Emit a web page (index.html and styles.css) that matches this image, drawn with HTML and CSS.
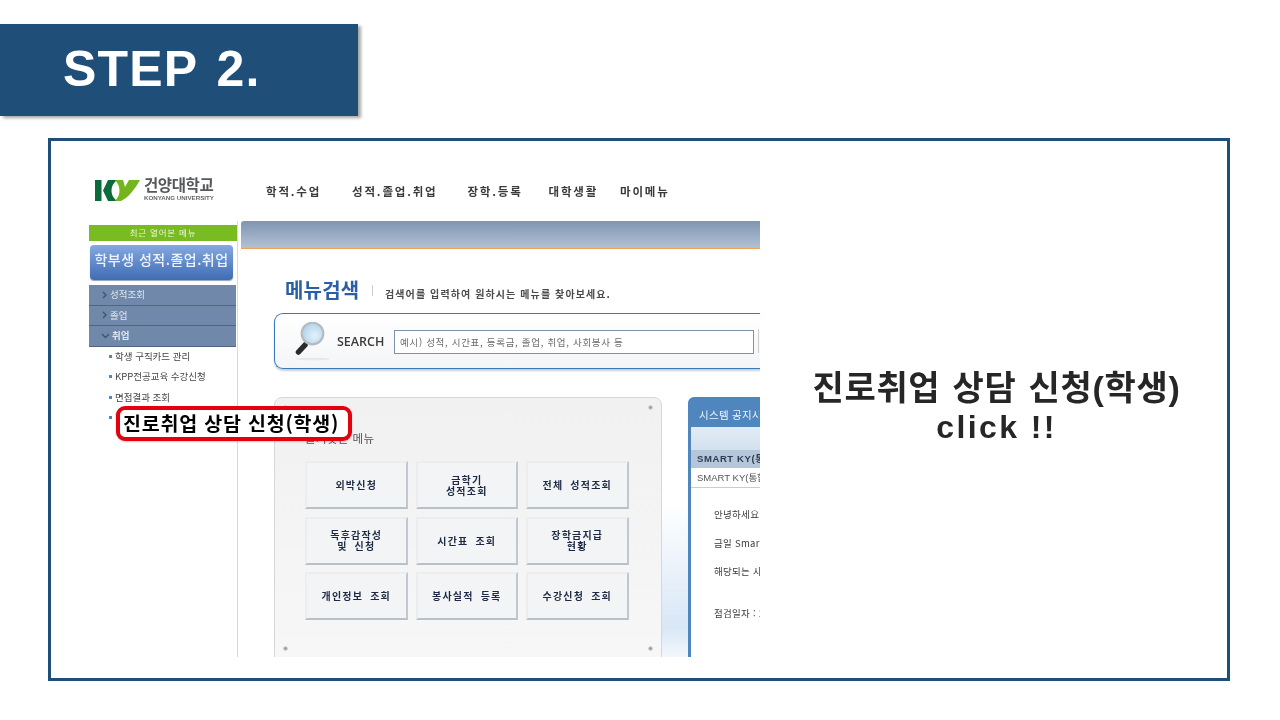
FILE: index.html
```html
<!DOCTYPE html>
<html lang="ko">
<head>
<meta charset="utf-8">
<title>STEP 2.</title>
<link rel="stylesheet" href="styles.css">
</head>
<body>
<div class="slide">
  <h1 class="banner">STEP 2.</h1>
  <section class="frame">
    <div class="shot">
      <header class="shot-head">
        <div class="logo">
          <svg class="logo-mark" width="46" height="21" viewBox="0 0 46 21">
            <rect x="0" y="0" width="6.500" height="21" fill="#0b6b3a"/>
            <path d="M8 10.500 L13 0 H22 C18 3 16.500 7 16.500 10.500 C16.500 14 18 18 22 21 H13 Z" fill="#0b6b3a"/>
            <path d="M20 0 H28 C29 3 29.500 5 30 7 L34 0 H45 C40 9 33 18 26 21 H20 C23 18 24.500 14 24.500 10.500 C24.500 7 23 3 20 0 Z" fill="#74b51e"/>
          </svg>
          <div class="logo-text">
            <span class="logo-ko">건양대학교</span>
            <span class="logo-en">KONYANG UNIVERSITY</span>
          </div>
        </div>
        <nav class="topnav">
          <span>학적.수업</span>
          <span>성적.졸업.취업</span>
          <span>장학.등록</span>
          <span>대학생활</span>
          <span>마이메뉴</span>
        </nav>
      </header>
      <div class="shot-body">
        <aside class="side">
          <div class="recent">최근 열어본 메뉴</div>
          <div class="side-title">학부생 성적.졸업.취업</div>
          <ul class="side-menu">
            <li><svg width="7" height="8" viewBox="0 0 7 8"><path d="M2 1l3 3-3 3" fill="none" stroke="#3d566f" stroke-width="1.4"/></svg>성적조회</li>
            <li><svg width="7" height="8" viewBox="0 0 7 8"><path d="M2 1l3 3-3 3" fill="none" stroke="#3d566f" stroke-width="1.4"/></svg>졸업</li>
            <li class="open"><svg width="9" height="8" viewBox="0 0 9 8"><path d="M1 2l3.500 3.500L8 2" fill="none" stroke="#3d566f" stroke-width="1.4"/></svg>취업</li>
          </ul>
          <ul class="side-sub">
            <li>학생 구직카드 관리</li>
            <li>KPP전공교육 수강신청</li>
            <li>면접결과 조회</li>
            <li>진로취업 상담 신청(학생)</li>
          </ul>
        </aside>
        <main class="main">
          <div class="main-bar"></div>
          <div class="main-inner">
            <div class="title-row">
              <h2>메뉴검색</h2>
              <p>검색어를 입력하여 원하시는 메뉴를 찾아보세요.</p>
            </div>
            <div class="search">
              <svg class="lens" width="38" height="40" viewBox="0 0 38 40">
                <defs>
                  <radialGradient id="glass" cx=".6" cy=".6" r=".7">
                    <stop offset="0" stop-color="#e4f1fa"/>
                    <stop offset="1" stop-color="#a9cfe8"/>
                  </radialGradient>
                </defs>
                <ellipse cx="19" cy="37" rx="17" ry="1.300" fill="#e8e8e8"/>
                <path d="M11 23 L4.500 30" stroke="#2b2b2b" stroke-width="5.500" stroke-linecap="round"/>
                <circle cx="18.500" cy="11.500" r="10.800" fill="url(#glass)" stroke="#b4bcc2" stroke-width="2.200"/>
              </svg>
              <span class="search-label">SEARCH</span>
              <div class="search-input">예시) 성적, 시간표, 등록금, 졸업, 취업, 사회봉사 등</div>
              <div class="search-btn"></div>
            </div>
            <div class="panels">
              <div class="quick">
                <i class="rivet tl"></i><i class="rivet tr"></i><i class="rivet bl"></i><i class="rivet br"></i>
                <h3>즐겨찾는 메뉴</h3>
                <div class="quick-grid">
                  <a>외박신청</a>
                  <a>금학기<br>성적조회</a>
                  <a>전체 성적조회</a>
                  <a>독후감작성<br>및 신청</a>
                  <a>시간표 조회</a>
                  <a>장학금지급<br>현황</a>
                  <a>개인정보 조회</a>
                  <a>봉사실적 등록</a>
                  <a>수강신청 조회</a>
                </div>
              </div>
              <div class="glow"></div>
              <div class="notice">
                <div class="notice-title">시스템 공지사항</div>
                <div class="notice-body">
                  <div class="notice-band"></div>
                  <div class="notice-subject">SMART KY(통합정보시스템)</div>
                  <div class="notice-sub">SMART KY(통합정보시스템)</div>
                  <p class="n1">안녕하세요. 정보운영팀입니다.</p>
                  <p class="n2">금일 Smart KY 시스템 점검</p>
                  <p class="n3">해당되는 사용자께서는</p>
                  <p class="n4">점검일자 : 2020년</p>
                </div>
              </div>
            </div>
          </div>
        </main>
      </div>
      <div class="callout">진로취업 상담 신청(학생)</div>
    </div>
    <div class="caption">
      <p>진로취업 상담 신청(학생)</p>
      <p class="click">click !!</p>
    </div>
  </section>
</div>
</body>
</html>
```

FILE: styles.css
```css
* { box-sizing: border-box; }
html, body { margin: 0; padding: 0; background: #fff; }
body { font-family: "Liberation Sans", "Noto Sans CJK KR", sans-serif; overflow: hidden; }
h1, h2, h3, p, ul { margin: 0; padding: 0; }
ul { list-style: none; }

.slide { width: 1280px; height: 720px; padding-top: 24px; filter: blur(.35px); }

.banner {
  width: 358px; height: 92px;
  padding-left: 63px;
  background: #1f4e79;
  color: #fff;
  font-size: 50px; line-height: 90px; font-weight: 700; letter-spacing: 1.200px; word-spacing: 4px;
  box-shadow: 3px 2px 3px rgba(0,0,0,.35);
}

.frame {
  width: 1182px; height: 543px;
  margin: 22px 0 0 48px;
  border: 3px solid #1f4e79;
  display: flex;
}

.shot {
  position: relative;
  flex: none;
  width: 709px; height: 516px;
  padding-left: 38px;
  overflow: hidden;
  font-family: "Noto Sans CJK KR", sans-serif;
}

.shot-head { height: 80px; display: flex; align-items: flex-start; }

.logo { width: 177px; padding: 37px 0 0 6px; display: flex; gap: 3px; }
.logo-mark { flex: none; margin-top: 2px; }
.logo-text { display: flex; flex-direction: column; margin-top: -2px; }
.logo-ko { font-size: 15.500px; line-height: 17px; font-weight: 700; color: #55595c; white-space: nowrap; letter-spacing: -.4px; }
.logo-en { font-size: 6.200px; line-height: 9px; font-weight: 700; color: #666; white-space: nowrap; font-family: "Liberation Sans", sans-serif; }

.topnav { display: flex; padding-top: 41px; font-size: 11.500px; line-height: 18px; color: #3a3a3a; letter-spacing: 1.800px; font-weight: 700; white-space: nowrap; }
.topnav span:nth-child(2) { margin-left: 31px; }
.topnav span:nth-child(3) { margin-left: 30px; }
.topnav span:nth-child(4) { margin-left: 26px; }
.topnav span:nth-child(5) { margin-left: 22px; }

.shot-body { display: flex; height: 436px; }

.side { flex: none; width: 149px; padding-top: 4px; border-right: 1px solid #d5d8dc; }
.recent { width: 148px; height: 16px; background: #78bc21; color: #e9f5d5; font-size: 8.500px; line-height: 15px; text-align: center; letter-spacing: .8px; }
.side-title {
  width: 143px; height: 35px; margin: 4px 0 0 1px;
  border-radius: 4px;
  background: linear-gradient(#85a9e0, #3f6cb4);
  color: #eef3fb;
  font-size: 14px; line-height: 28px; font-weight: 500; text-align: center; letter-spacing: .5px;
  white-space: nowrap;
  box-shadow: 0 1px 1px #8ea3bd;
}
.side-menu { margin-top: 5px; }
.side-menu li {
  width: 147px; height: 20.500px;
  background: #7089ab;
  border-bottom: 1px solid #50657f;
  color: #dfe6ee;
  font-size: 9.500px; line-height: 19px;
  padding-left: 12px;
  display: flex; align-items: center; gap: 2px;
}
.side-menu li.open { font-weight: 700; }
.side-sub { padding-left: 21px; margin-top: -1px; }
.side-sub li { position: relative; height: 20.500px; padding-left: 5px; font-size: 9.500px; line-height: 20px; color: #444; white-space: nowrap; }
.side-sub li::before { content: ""; position: absolute; left: -1px; top: 9px; width: 3px; height: 3px; background: #4f86bd; }

.main { flex: none; width: 519px; margin-left: 3px; overflow: hidden; }
.main-bar { height: 28px; border-radius: 3px 0 0 0; background: linear-gradient(#7f95b3, #b3c1d3); border-bottom: 1px solid #eda45a; }
.main-inner { padding-left: 33px; }

.title-row { display: flex; align-items: center; height: 36px; margin: 23px 0 0 11px; }
.title-row h2 { font-size: 20px; line-height: 30px; font-weight: 700; color: #2a5fa8; letter-spacing: .2px; width: 88px; position: relative; }
.title-row h2::after { content: ""; position: absolute; right: 0; top: 10px; width: 1px; height: 11px; background: #ccc; }
.title-row p { margin-left: 12px; padding-top: 6px; font-size: 10px; font-weight: 700; color: #4a4a4a; letter-spacing: 1.100px; white-space: nowrap; }

.search {
  width: 520px; height: 56px; margin-top: 5px;
  border: 1.500px solid #3a78b8; border-right: 0;
  border-radius: 9px 0 0 9px;
  background: linear-gradient(#fff, #f4f5f7);
  box-shadow: 0 2px 2px rgba(90,120,150,.35);
  display: flex; align-items: center;
  padding-left: 19px;
}
.lens { flex: none; margin-top: 2px; }
.search-label { margin-left: 5px; font-family: "Open Sans", sans-serif; font-size: 12.500px; font-weight: 600; color: #3c3c3c; width: 57px; }
.search-input { flex: none; width: 360px; height: 24px; margin-top: 1px; border: 1px solid #7d93ad; padding-left: 5px; font-size: 9.500px; line-height: 22px; color: #6b6b6b; letter-spacing: .7px; background: #fff; white-space: nowrap; }
.search-btn { flex: none; width: 1px; height: 24px; margin-left: 4px; background: #ccc; }

.panels { display: flex; margin-top: 28px; }

.quick {
  position: relative; flex: none;
  width: 388px; height: 262px;
  border: 1px solid #d7d7d7;
  border-radius: 8px 8px 0 0;
  background: linear-gradient(#f1f1f2, #f7f7f8);
  padding: 30px 0 0 30px;
}
.quick h3 { font-size: 11.500px; line-height: 20px; font-weight: 400; color: #555; letter-spacing: .4px; }
.quick-grid { display: grid; grid-template-columns: repeat(3, 102.500px); grid-auto-rows: 48px; column-gap: 8px; row-gap: 7.500px; margin-top: 13px; }
.quick-grid a {
  display: flex; align-items: center; justify-content: center;
  text-align: center;
  padding-bottom: 1px;
  background: #f3f4f5;
  border: 2px solid #ebedef; border-right-color: #c0c7ce; border-bottom-color: #b8c0c8;
  font-size: 10px; line-height: 11px; font-weight: 700; color: #1e2a44; letter-spacing: 1.200px; word-spacing: 3px;
}
.rivet { position: absolute; width: 5px; height: 5px; border-radius: 50%; background: #9aa0a4; border: 1px solid #d9d9d9; }
.tl { left: 8px; top: 7px; } .tr { right: 8px; top: 7px; }
.bl { left: 8px; bottom: 7px; } .br { right: 8px; bottom: 7px; }

.glow { flex: none; width: 26px; background: linear-gradient(#fff 40%, #d8e7f6 88%, #f4f8fc); }

.notice {
  flex: none; width: 110px; height: 262px;
  background: #4f86bd;
  border-radius: 6px 0 0 0;
  padding-left: 3px;
  overflow: hidden;
}
.notice-title { height: 30px; padding-left: 8px; color: #eef4fa; font-size: 10.500px; line-height: 36px; letter-spacing: .3px; white-space: nowrap; overflow: hidden; width: 68px; }
.notice-body { width: 107px; height: 232px; background: #fff; font-size: 9.500px; color: #3a3a3a; overflow: hidden; }
.notice-band { height: 23px; background: linear-gradient(#e3ecf5, #d3e0ee); }
.notice-subject { height: 18px; background: #b5c6da; font-size: 9.500px; line-height: 18px; font-weight: 700; color: #2e3c4f; padding-left: 6px; white-space: nowrap; width: 69px; overflow: hidden; letter-spacing: .6px; font-family: "Liberation Sans", "Noto Sans CJK KR", sans-serif; }
.notice-sub { height: 20px; border-bottom: 1px solid #ccc; line-height: 19px; padding-left: 6px; white-space: nowrap; color: #555; width: 69px; overflow: hidden; font-family: "Liberation Sans", "Noto Sans CJK KR", sans-serif; }
.notice-body p { padding-left: 23px; width: 69px; white-space: nowrap; overflow: hidden; line-height: 14px; letter-spacing: .3px; }
.n1 { margin-top: 19px; }
.n2 { margin-top: 15px; }
.n3 { margin-top: 14px; }
.n4 { margin-top: 28px; }

.callout {
  position: absolute; left: 65px; top: 265px;
  width: 236px; height: 35px;
  border: 4px solid #e3000f; border-radius: 9px;
  background: #fff; color: #000;
  font-size: 19.500px; line-height: 25px; font-weight: 700; padding-left: 3px;
  white-space: nowrap; letter-spacing: .8px;
  box-shadow: 0 1px 2px rgba(0,0,0,.2);
}

.caption { flex: 1; padding: 228px 0 0 6px; text-align: center; color: #262626; font-weight: 700; font-size: 34px; line-height: 39px; white-space: nowrap; letter-spacing: .7px; word-spacing: 2px; }
.click { font-size: 32px; letter-spacing: 2.400px; word-spacing: 0; }
```
